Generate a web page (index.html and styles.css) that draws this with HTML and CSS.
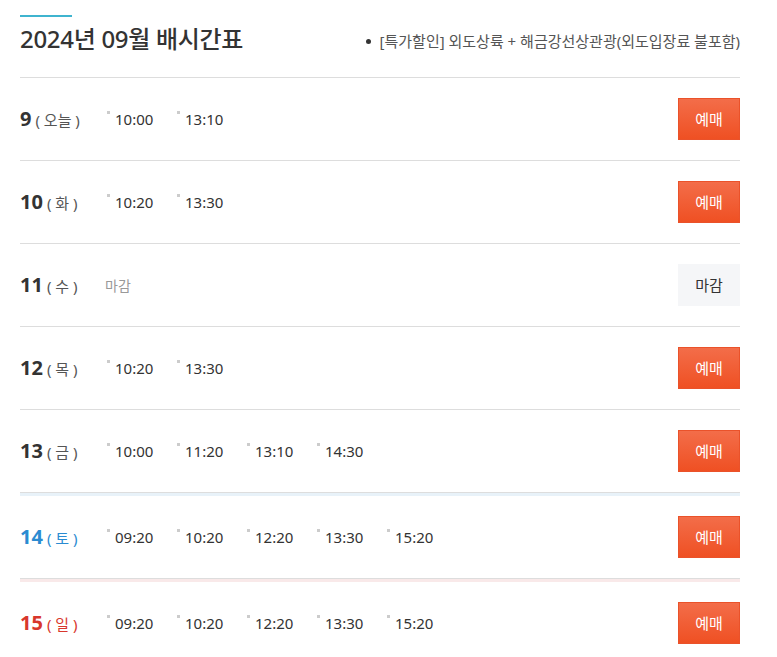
FILE: index.html
```html
<!DOCTYPE html>
<html lang="ko">
<head>
<meta charset="utf-8">
<title>배시간표</title>
<link rel="stylesheet" href="styles.css">
</head>
<body>
<div class="wrap">
  <div class="head">
    <div class="bar"></div>
    <div class="head-row">
      <h2 class="title">2024년 09월 배시간표</h2>
      <p class="notice">[특가할인] 외도상륙 + 해금강선상관광(외도입장료 불포함)</p>
    </div>
  </div>
  <ul class="list">
    <li class="row">
      <div class="day"><strong>9</strong><span class="wd">( 오늘 )</span></div>
      <div class="times"><span class="t">10:00</span><span class="t">13:10</span></div>
      <a class="btn buy">예매</a>
    </li>
    <li class="row">
      <div class="day"><strong>10</strong><span class="wd">( 화 )</span></div>
      <div class="times"><span class="t">10:20</span><span class="t">13:30</span></div>
      <a class="btn buy">예매</a>
    </li>
    <li class="row">
      <div class="day"><strong>11</strong><span class="wd">( 수 )</span></div>
      <div class="times"><span class="closed">마감</span></div>
      <a class="btn off">마감</a>
    </li>
    <li class="row">
      <div class="day"><strong>12</strong><span class="wd">( 목 )</span></div>
      <div class="times"><span class="t">10:20</span><span class="t">13:30</span></div>
      <a class="btn buy">예매</a>
    </li>
    <li class="row">
      <div class="day"><strong>13</strong><span class="wd">( 금 )</span></div>
      <div class="times"><span class="t">10:00</span><span class="t">11:20</span><span class="t">13:10</span><span class="t">14:30</span></div>
      <a class="btn buy">예매</a>
    </li>
    <li class="row sat">
      <div class="day"><strong>14</strong><span class="wd">( 토 )</span></div>
      <div class="times"><span class="t">09:20</span><span class="t">10:20</span><span class="t">12:20</span><span class="t">13:30</span><span class="t">15:20</span></div>
      <a class="btn buy">예매</a>
    </li>
    <li class="row sun">
      <div class="day"><strong>15</strong><span class="wd">( 일 )</span></div>
      <div class="times"><span class="t">09:20</span><span class="t">10:20</span><span class="t">12:20</span><span class="t">13:30</span><span class="t">15:20</span></div>
      <a class="btn buy">예매</a>
    </li>
  </ul>
</div>
</body>
</html>
```
FILE: styles.css
```css
* { box-sizing: border-box; }
html, body { margin: 0; padding: 0; background: #fff; }
body {
  font-family: "Noto Sans", "Noto Sans CJK KR", sans-serif;
  color: #333;
}
.wrap {
  width: 720px;
  margin-left: 20px;
}
.head {
  padding-top: 15px;
  padding-bottom: 22px;
  border-bottom: 1px solid #dddddd;
}
.bar {
  width: 52px;
  height: 2px;
  background: #3fb4cf;
  margin-bottom: 6px;
}
.head-row {
  display: flex;
  justify-content: space-between;
  align-items: center;
  height: 32px;
}
.title {
  margin: 0;
  font-size: 24px;
  font-weight: 500;
  line-height: 32px;
  color: #333;
  letter-spacing: -0.3px;
}
.notice {
  margin: 0;
  font-size: 15px;
  line-height: 20px;
  color: #555;
  display: flex;
  align-items: center;
  padding-top: 4px;
}
.notice::before {
  content: "";
  width: 5px;
  height: 5px;
  border-radius: 50%;
  background: #333;
  margin-right: 9px;
}
.list {
  list-style: none;
  margin: 0;
  padding: 0;
}
.row {
  display: flex;
  align-items: center;
  padding: 20px 0;
  border-bottom: 1px solid #dddddd;
}
.row.sat {
  padding-top: 23px;
  box-shadow: inset 0 3px 0 #e8f2f9;
}
.row.sun {
  padding-top: 23px;
  box-shadow: inset 0 3px 0 #f9e9e9;
  border-bottom: none;
}
.day {
  width: 87px;
  flex: none;
  display: flex;
  align-items: baseline;
  color: #333;
}
.day strong {
  font-size: 20px;
  font-weight: 700;
  line-height: 26px;
  margin-right: 4px;
}
.wd {
  font-size: 15px;
  color: #555;
}
.sat .day strong, .sat .wd { color: #2b8bd1; }
.sun .day strong, .sun .wd { color: #d8372c; }
.times {
  flex: 1;
  display: flex;
  align-items: center;
}
.t {
  width: 70px;
  display: flex;
  align-items: flex-start;
  font-size: 15px;
  line-height: 20px;
  color: #333;
}
.t::before {
  content: "";
  width: 3px;
  height: 3px;
  margin-top: 2px;
  margin-right: 5px;
  background: #cccccc;
}
.closed {
  font-size: 14px;
  color: #999;
  margin-left: -2px;
}
.btn {
  flex: none;
  width: 62px;
  height: 42px;
  display: flex;
  align-items: center;
  justify-content: center;
  font-size: 15px;
  line-height: 20px;
  text-decoration: none;
}
.buy {
  color: #fff;
  background: linear-gradient(#f36d49, #ef5023);
  border: 1px solid #ea522a;
}
.off {
  color: #333;
  background: #f5f6f8;
}
```
